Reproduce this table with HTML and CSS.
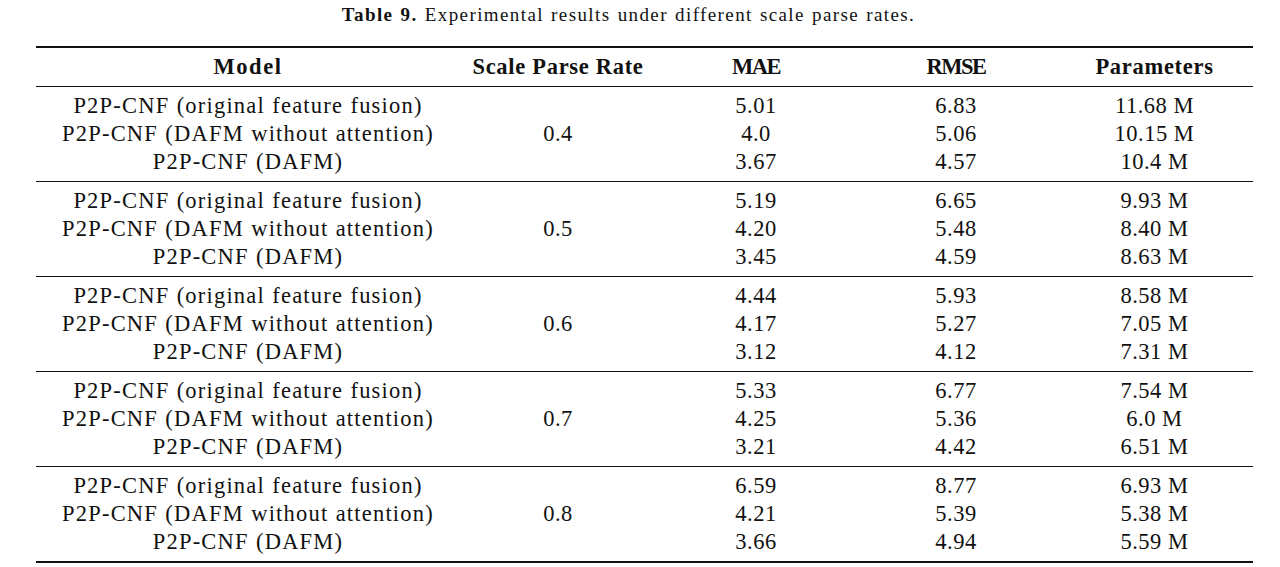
FILE: index.html
```html
<!DOCTYPE html>
<html lang="en">
<head>
<meta charset="utf-8">
<title>Table 9</title>
<link rel="stylesheet" href="styles.css">
</head>
<body>
<div class="page">
  <p class="caption"><b>Table 9.</b> Experimental results under different scale parse rates.</p>
  <table class="results">
    <colgroup>
      <col class="c-model"><col class="c-rate"><col class="c-num"><col class="c-num"><col class="c-par">
    </colgroup>
    <thead>
      <tr><th class="word">Model</th><th>Scale Parse Rate</th><th class="caps">MAE</th><th class="caps">RMSE</th><th>Parameters</th></tr>
    </thead>
    <tbody>
      <tr class="first"><td class="model">P2P-CNF (original feature fusion)</td><td rowspan="3">0.4</td><td>5.01</td><td>6.83</td><td>11.68 M</td></tr>
      <tr><td class="model">P2P-CNF (DAFM without attention)</td><td>4.0</td><td>5.06</td><td>10.15 M</td></tr>
      <tr class="last"><td class="model">P2P-CNF (DAFM)</td><td>3.67</td><td>4.57</td><td>10.4 M</td></tr>
    </tbody>
    <tbody>
      <tr class="first"><td class="model">P2P-CNF (original feature fusion)</td><td rowspan="3">0.5</td><td>5.19</td><td>6.65</td><td>9.93 M</td></tr>
      <tr><td class="model">P2P-CNF (DAFM without attention)</td><td>4.20</td><td>5.48</td><td>8.40 M</td></tr>
      <tr class="last"><td class="model">P2P-CNF (DAFM)</td><td>3.45</td><td>4.59</td><td>8.63 M</td></tr>
    </tbody>
    <tbody>
      <tr class="first"><td class="model">P2P-CNF (original feature fusion)</td><td rowspan="3">0.6</td><td>4.44</td><td>5.93</td><td>8.58 M</td></tr>
      <tr><td class="model">P2P-CNF (DAFM without attention)</td><td>4.17</td><td>5.27</td><td>7.05 M</td></tr>
      <tr class="last"><td class="model">P2P-CNF (DAFM)</td><td>3.12</td><td>4.12</td><td>7.31 M</td></tr>
    </tbody>
    <tbody>
      <tr class="first"><td class="model">P2P-CNF (original feature fusion)</td><td rowspan="3">0.7</td><td>5.33</td><td>6.77</td><td>7.54 M</td></tr>
      <tr><td class="model">P2P-CNF (DAFM without attention)</td><td>4.25</td><td>5.36</td><td>6.0 M</td></tr>
      <tr class="last"><td class="model">P2P-CNF (DAFM)</td><td>3.21</td><td>4.42</td><td>6.51 M</td></tr>
    </tbody>
    <tbody>
      <tr class="first"><td class="model">P2P-CNF (original feature fusion)</td><td rowspan="3">0.8</td><td>6.59</td><td>8.77</td><td>6.93 M</td></tr>
      <tr><td class="model">P2P-CNF (DAFM without attention)</td><td>4.21</td><td>5.39</td><td>5.38 M</td></tr>
      <tr class="last"><td class="model">P2P-CNF (DAFM)</td><td>3.66</td><td>4.94</td><td>5.59 M</td></tr>
    </tbody>
  </table>
</div>
</body>
</html>
```

FILE: styles.css
```css
html, body {
  margin: 0;
  padding: 0;
  background: #ffffff;
}

.page {
  padding: 0 27px 0 36px;
  font-family: "Liberation Serif", "Times New Roman", serif;
  color: #111111;
}

.caption {
  margin: 0;
  padding: 4px 32px 0 0;
  height: 42px;
  text-align: center;
  font-size: 19px;
  line-height: 22px;
  letter-spacing: 1.4px;
  word-spacing: 1px;
}

.caption b {
  font-weight: bold;
}

.results {
  width: 1217px;
  border-collapse: collapse;
  table-layout: fixed;
  font-size: 22.5px;
  border-top: 2px solid #111111;
  border-bottom: 2.5px solid #111111;
}

.c-model { width: 424px; }
.c-rate { width: 196px; }
.c-num { width: 200px; }
.c-par { width: 197px; }

.results th {
  font-weight: bold;
  height: 38px;
  padding: 0;
  line-height: 38px;
  text-align: center;
  letter-spacing: 0.7px;
  border-bottom: 1.5px solid #111111;
}

.results th.word {
  letter-spacing: 1.6px;
}

.results th.caps {
  letter-spacing: -1.5px;
}

.results td {
  padding: 0;
  height: 28px;
  line-height: 28px;
  text-align: center;
  white-space: nowrap;
  letter-spacing: 0.5px;
}

.results td.model {
  letter-spacing: 1.2px;
  word-spacing: 0.5px;
}

.results tr.first td {
  padding-top: 5px;
}

.results tr.last td {
  padding-bottom: 5px;
}

.results td[rowspan] {
  vertical-align: middle;
  padding-top: 5px;
  padding-bottom: 5px;
}

.results tbody + tbody {
  border-top: 1.5px solid #111111;
}
```
